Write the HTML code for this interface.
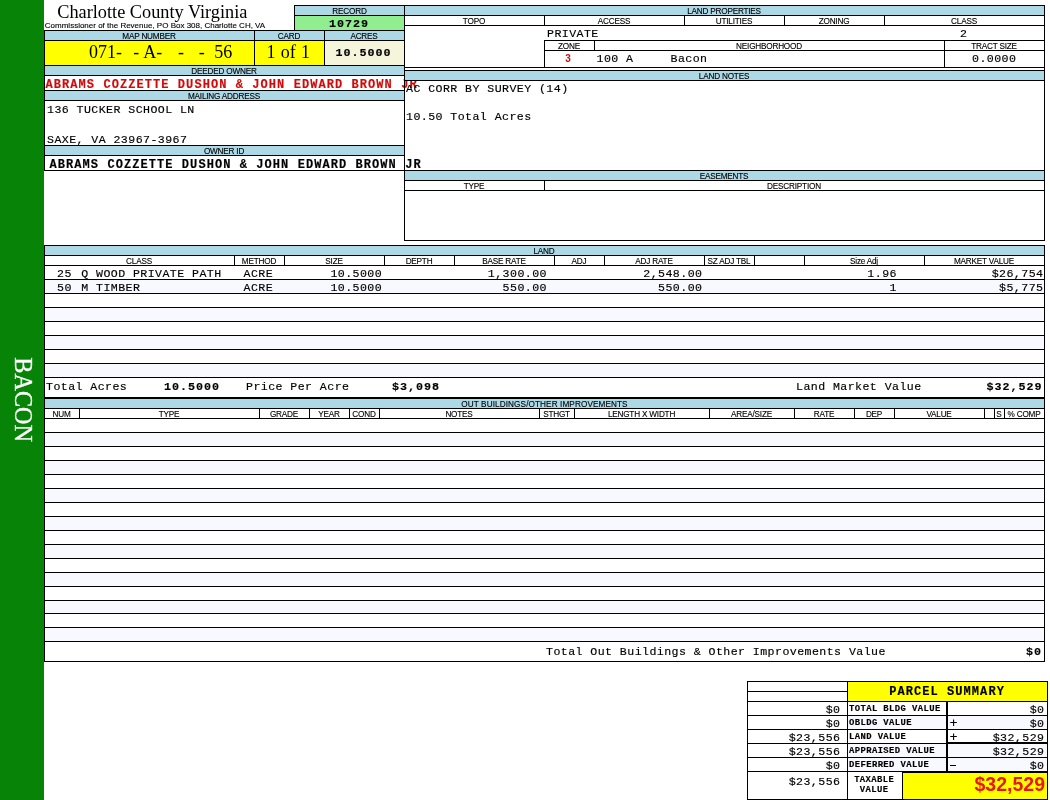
<!DOCTYPE html>
<html><head><meta charset="utf-8"><title>Charlotte County Virginia - Property Card</title>
<style>
html,body{margin:0;padding:0;background:#fff;}
body{width:1050px;height:800px;position:relative;overflow:hidden;will-change:transform;}
.r{position:absolute;}
.t{position:absolute;white-space:nowrap;line-height:20px;height:20px;color:#000;}
.m{font-family:"Liberation Mono",monospace;-webkit-text-stroke:0.15px currentColor;}
.s{font-family:"Liberation Sans",sans-serif;}
.f{font-family:"Liberation Serif",serif;}
</style></head><body>
<div class="r" style="left:0px;top:0px;width:44px;height:800px;background:#078307"></div>
<div class="r" style="left:44px;top:30px;width:1px;height:141px;background:#000"></div>
<div class="t f" style="left:0;top:0;font-size:24.2px;color:#fff;line-height:24px;transform-origin:0 0;transform:translate(35.3px,357.3px) rotate(90deg);-webkit-text-stroke:0.3px #fff;">BACON</div>
<div class="t f" style="top:-2px;font-size:18.3px;line-height:28px;height:28px;left:-147.7px;width:600px;text-align:center;">Charlotte County Virginia</div>
<div class="t s" style="top:17px;font-size:8px;line-height:17px;height:17px;left:-145px;width:600px;text-align:center;-webkit-text-stroke:0.12px #000;">Commissioner of the Revenue, PO Box 308, Charlotte CH, VA</div>
<div class="r" style="left:295px;top:6px;width:109px;height:9px;background:#ADD8E6"></div>
<div class="r" style="left:295px;top:16px;width:109px;height:14px;background:#90EE90"></div>
<div class="r" style="left:294px;top:5px;width:751px;height:1px;background:#000"></div>
<div class="r" style="left:294px;top:5px;width:1px;height:26px;background:#000"></div>
<div class="r" style="left:294px;top:15px;width:111px;height:1px;background:#000"></div>
<div class="t s" style="top:3px;font-size:8.2px;line-height:17px;height:17px;left:49.5px;width:600px;text-align:center;letter-spacing:-0.2px;-webkit-text-stroke:0.12px #000;">RECORD</div>
<div class="t m" style="top:13px;font-size:11.7px;line-height:22px;height:22px;left:48.99000000000001px;width:600px;text-align:center;font-weight:bold;letter-spacing:0.98px;">10729</div>
<div class="r" style="left:45px;top:31px;width:359px;height:9px;background:#ADD8E6"></div>
<div class="r" style="left:45px;top:41px;width:209px;height:24px;background:#FFFF00"></div>
<div class="r" style="left:255px;top:41px;width:69px;height:24px;background:#FFFF00"></div>
<div class="r" style="left:325px;top:41px;width:79px;height:24px;background:#F5F5DC"></div>
<div class="r" style="left:44px;top:30px;width:361px;height:1px;background:#000"></div>
<div class="r" style="left:44px;top:40px;width:361px;height:1px;background:#000"></div>
<div class="r" style="left:44px;top:65px;width:361px;height:1px;background:#000"></div>
<div class="r" style="left:254px;top:30px;width:1px;height:36px;background:#000"></div>
<div class="r" style="left:324px;top:30px;width:1px;height:36px;background:#000"></div>
<div class="t s" style="top:28px;font-size:8.2px;line-height:17px;height:17px;left:-151px;width:600px;text-align:center;letter-spacing:-0.2px;-webkit-text-stroke:0.12px #000;">MAP NUMBER</div>
<div class="t s" style="top:28px;font-size:8.2px;line-height:17px;height:17px;left:-11px;width:600px;text-align:center;letter-spacing:-0.2px;-webkit-text-stroke:0.12px #000;">CARD</div>
<div class="t s" style="top:28px;font-size:8.2px;line-height:17px;height:17px;left:64px;width:600px;text-align:center;letter-spacing:-0.2px;-webkit-text-stroke:0.12px #000;">ACRES</div>
<div class="t f" style="top:38px;font-size:18px;line-height:28px;height:28px;left:89px;">071-</div>
<div class="t f" style="top:38px;font-size:18px;line-height:28px;height:28px;left:133.3px;">-</div>
<div class="t f" style="top:38px;font-size:18px;line-height:28px;height:28px;left:143.3px;">A-</div>
<div class="t f" style="top:38px;font-size:18px;line-height:28px;height:28px;left:178px;">-</div>
<div class="t f" style="top:38px;font-size:18px;line-height:28px;height:28px;left:198.8px;">-</div>
<div class="t f" style="top:38px;font-size:18px;line-height:28px;height:28px;left:214.3px;">56</div>
<div class="t f" style="top:38px;font-size:18px;line-height:28px;height:28px;left:-11.699999999999989px;width:600px;text-align:center;word-spacing:0.8px;">1 of 1</div>
<div class="t m" style="top:42px;font-size:11.7px;line-height:22px;height:22px;left:63.49000000000001px;width:600px;text-align:center;font-weight:bold;letter-spacing:0.98px;">10.5000</div>
<div class="r" style="left:45px;top:66px;width:359px;height:9px;background:#ADD8E6"></div>
<div class="r" style="left:44px;top:75px;width:361px;height:1px;background:#000"></div>
<div class="t s" style="top:63px;font-size:8.2px;line-height:17px;height:17px;left:-76px;width:600px;text-align:center;letter-spacing:-0.2px;-webkit-text-stroke:0.12px #000;">DEEDED OWNER</div>
<div class="t m" style="top:74px;font-size:12.0px;line-height:22px;height:22px;left:45.5px;font-weight:bold;color:#D00A0A;letter-spacing:1.07px;">ABRAMS&nbsp;COZZETTE&nbsp;DUSHON&nbsp;&amp;&nbsp;JOHN&nbsp;EDWARD&nbsp;BROWN&nbsp;JR</div>
<div class="r" style="left:44px;top:90px;width:361px;height:1px;background:#000"></div>
<div class="r" style="left:45px;top:91px;width:359px;height:9px;background:#ADD8E6"></div>
<div class="r" style="left:44px;top:100px;width:361px;height:1px;background:#000"></div>
<div class="t s" style="top:88px;font-size:8.2px;line-height:17px;height:17px;left:-76px;width:600px;text-align:center;letter-spacing:-0.2px;-webkit-text-stroke:0.12px #000;">MAILING ADDRESS</div>
<div class="t m" style="top:99px;font-size:11.6px;line-height:21px;height:21px;left:47px;letter-spacing:0.43px;">136&nbsp;TUCKER&nbsp;SCHOOL&nbsp;LN</div>
<div class="t m" style="top:129px;font-size:11.6px;line-height:21px;height:21px;left:47px;letter-spacing:0.43px;">SAXE,&nbsp;VA&nbsp;23967-3967</div>
<div class="r" style="left:44px;top:145px;width:361px;height:1px;background:#000"></div>
<div class="r" style="left:45px;top:146px;width:359px;height:9px;background:#ADD8E6"></div>
<div class="r" style="left:44px;top:155px;width:361px;height:1px;background:#000"></div>
<div class="t s" style="top:143px;font-size:8.2px;line-height:17px;height:17px;left:-76px;width:600px;text-align:center;letter-spacing:-0.2px;-webkit-text-stroke:0.12px #000;">OWNER ID</div>
<div class="t m" style="top:154px;font-size:12.0px;line-height:22px;height:22px;left:49.5px;font-weight:bold;letter-spacing:1.07px;">ABRAMS&nbsp;COZZETTE&nbsp;DUSHON&nbsp;&amp;&nbsp;JOHN&nbsp;EDWARD&nbsp;BROWN&nbsp;JR</div>
<div class="r" style="left:44px;top:170px;width:361px;height:1px;background:#000"></div>
<div class="r" style="left:405px;top:6px;width:639px;height:9px;background:#ADD8E6"></div>
<div class="r" style="left:404px;top:5px;width:1px;height:236px;background:#000"></div>
<div class="r" style="left:1044px;top:5px;width:1px;height:236px;background:#000"></div>
<div class="r" style="left:404px;top:15px;width:641px;height:1px;background:#000"></div>
<div class="r" style="left:404px;top:25px;width:641px;height:1px;background:#000"></div>
<div class="r" style="left:544px;top:15px;width:1px;height:11px;background:#000"></div>
<div class="r" style="left:684px;top:15px;width:1px;height:11px;background:#000"></div>
<div class="r" style="left:784px;top:15px;width:1px;height:11px;background:#000"></div>
<div class="r" style="left:884px;top:15px;width:1px;height:11px;background:#000"></div>
<div class="t s" style="top:3px;font-size:8.2px;line-height:17px;height:17px;left:424px;width:600px;text-align:center;letter-spacing:-0.2px;-webkit-text-stroke:0.12px #000;">LAND PROPERTIES</div>
<div class="t s" style="top:13px;font-size:8.2px;line-height:17px;height:17px;left:174px;width:600px;text-align:center;letter-spacing:-0.2px;-webkit-text-stroke:0.12px #000;">TOPO</div>
<div class="t s" style="top:13px;font-size:8.2px;line-height:17px;height:17px;left:314px;width:600px;text-align:center;letter-spacing:-0.2px;-webkit-text-stroke:0.12px #000;">ACCESS</div>
<div class="t s" style="top:13px;font-size:8.2px;line-height:17px;height:17px;left:434px;width:600px;text-align:center;letter-spacing:-0.2px;-webkit-text-stroke:0.12px #000;">UTILITIES</div>
<div class="t s" style="top:13px;font-size:8.2px;line-height:17px;height:17px;left:534px;width:600px;text-align:center;letter-spacing:-0.2px;-webkit-text-stroke:0.12px #000;">ZONING</div>
<div class="t s" style="top:13px;font-size:8.2px;line-height:17px;height:17px;left:664px;width:600px;text-align:center;letter-spacing:-0.2px;-webkit-text-stroke:0.12px #000;">CLASS</div>
<div class="t m" style="top:23px;font-size:11.6px;line-height:21px;height:21px;left:547px;letter-spacing:0.43px;">PRIVATE</div>
<div class="t m" style="top:23px;font-size:11.6px;line-height:21px;height:21px;left:960px;letter-spacing:0.43px;">2</div>
<div class="r" style="left:544px;top:40px;width:501px;height:1px;background:#000"></div>
<div class="r" style="left:544px;top:50px;width:501px;height:1px;background:#000"></div>
<div class="r" style="left:544px;top:40px;width:1px;height:28px;background:#000"></div>
<div class="r" style="left:594px;top:40px;width:1px;height:11px;background:#000"></div>
<div class="r" style="left:944px;top:40px;width:1px;height:28px;background:#000"></div>
<div class="r" style="left:404px;top:67px;width:641px;height:1px;background:#000"></div>
<div class="t s" style="top:38px;font-size:8.2px;line-height:17px;height:17px;left:269px;width:600px;text-align:center;letter-spacing:-0.2px;-webkit-text-stroke:0.12px #000;">ZONE</div>
<div class="t s" style="top:38px;font-size:8.2px;line-height:17px;height:17px;left:469px;width:600px;text-align:center;letter-spacing:-0.2px;-webkit-text-stroke:0.12px #000;">NEIGHBORHOOD</div>
<div class="t s" style="top:38px;font-size:8.2px;line-height:17px;height:17px;left:694px;width:600px;text-align:center;letter-spacing:-0.2px;-webkit-text-stroke:0.12px #000;">TRACT SIZE</div>
<div class="t s" style="top:49px;font-size:10px;line-height:19px;height:19px;left:268px;width:600px;text-align:center;font-weight:bold;color:#D00A0A;">3</div>
<div class="t m" style="top:48px;font-size:11.6px;line-height:21px;height:21px;left:596.5px;letter-spacing:0.43px;">100&nbsp;A</div>
<div class="t m" style="top:48px;font-size:11.6px;line-height:21px;height:21px;left:670.5px;letter-spacing:0.43px;">Bacon</div>
<div class="t m" style="top:48px;font-size:11.6px;line-height:21px;height:21px;left:972px;letter-spacing:0.43px;">0.0000</div>
<div class="r" style="left:404px;top:70px;width:641px;height:1px;background:#000"></div>
<div class="r" style="left:405px;top:71px;width:639px;height:9px;background:#ADD8E6"></div>
<div class="r" style="left:404px;top:80px;width:641px;height:1px;background:#000"></div>
<div class="t s" style="top:68px;font-size:8.2px;line-height:17px;height:17px;left:424px;width:600px;text-align:center;letter-spacing:-0.2px;-webkit-text-stroke:0.12px #000;">LAND NOTES</div>
<div class="t m" style="top:78px;font-size:11.6px;line-height:21px;height:21px;left:406px;letter-spacing:0.43px;">AC&nbsp;CORR&nbsp;BY&nbsp;SURVEY&nbsp;(14)</div>
<div class="t m" style="top:106px;font-size:11.6px;line-height:21px;height:21px;left:406px;letter-spacing:0.43px;">10.50&nbsp;Total&nbsp;Acres</div>
<div class="r" style="left:404px;top:170px;width:641px;height:1px;background:#000"></div>
<div class="r" style="left:405px;top:171px;width:639px;height:9px;background:#ADD8E6"></div>
<div class="r" style="left:404px;top:180px;width:641px;height:1px;background:#000"></div>
<div class="r" style="left:404px;top:190px;width:641px;height:1px;background:#000"></div>
<div class="r" style="left:544px;top:180px;width:1px;height:11px;background:#000"></div>
<div class="r" style="left:404px;top:240px;width:641px;height:1px;background:#000"></div>
<div class="t s" style="top:168px;font-size:8.2px;line-height:17px;height:17px;left:424px;width:600px;text-align:center;letter-spacing:-0.2px;-webkit-text-stroke:0.12px #000;">EASEMENTS</div>
<div class="t s" style="top:178px;font-size:8.2px;line-height:17px;height:17px;left:174px;width:600px;text-align:center;letter-spacing:-0.2px;-webkit-text-stroke:0.12px #000;">TYPE</div>
<div class="t s" style="top:178px;font-size:8.2px;line-height:17px;height:17px;left:494px;width:600px;text-align:center;letter-spacing:-0.2px;-webkit-text-stroke:0.12px #000;">DESCRIPTION</div>
<div class="r" style="left:44px;top:245px;width:1px;height:417px;background:#000"></div>
<div class="r" style="left:1044px;top:245px;width:1px;height:417px;background:#000"></div>
<div class="r" style="left:44px;top:245px;width:1001px;height:1px;background:#000"></div>
<div class="r" style="left:45px;top:246px;width:999px;height:9px;background:#ADD8E6"></div>
<div class="r" style="left:44px;top:255px;width:1001px;height:1px;background:#000"></div>
<div class="r" style="left:44px;top:265px;width:1001px;height:1px;background:#000"></div>
<div class="t s" style="top:243px;font-size:8.2px;line-height:17px;height:17px;left:244px;width:600px;text-align:center;letter-spacing:-0.2px;-webkit-text-stroke:0.12px #000;">LAND</div>
<div class="t s" style="top:253px;font-size:8.2px;line-height:17px;height:17px;left:-161.0px;width:600px;text-align:center;letter-spacing:-0.2px;-webkit-text-stroke:0.12px #000;">CLASS</div>
<div class="r" style="left:234px;top:255px;width:1px;height:11px;background:#000"></div>
<div class="t s" style="top:253px;font-size:8.2px;line-height:17px;height:17px;left:-41.0px;width:600px;text-align:center;letter-spacing:-0.2px;-webkit-text-stroke:0.12px #000;">METHOD</div>
<div class="r" style="left:284px;top:255px;width:1px;height:11px;background:#000"></div>
<div class="t s" style="top:253px;font-size:8.2px;line-height:17px;height:17px;left:34.0px;width:600px;text-align:center;letter-spacing:-0.2px;-webkit-text-stroke:0.12px #000;">SIZE</div>
<div class="r" style="left:384px;top:255px;width:1px;height:11px;background:#000"></div>
<div class="t s" style="top:253px;font-size:8.2px;line-height:17px;height:17px;left:119.0px;width:600px;text-align:center;letter-spacing:-0.2px;-webkit-text-stroke:0.12px #000;">DEPTH</div>
<div class="r" style="left:454px;top:255px;width:1px;height:11px;background:#000"></div>
<div class="t s" style="top:253px;font-size:8.2px;line-height:17px;height:17px;left:204.0px;width:600px;text-align:center;letter-spacing:-0.2px;-webkit-text-stroke:0.12px #000;">BASE RATE</div>
<div class="r" style="left:554px;top:255px;width:1px;height:11px;background:#000"></div>
<div class="t s" style="top:253px;font-size:8.2px;line-height:17px;height:17px;left:279.0px;width:600px;text-align:center;letter-spacing:-0.2px;-webkit-text-stroke:0.12px #000;">ADJ</div>
<div class="r" style="left:604px;top:255px;width:1px;height:11px;background:#000"></div>
<div class="t s" style="top:253px;font-size:8.2px;line-height:17px;height:17px;left:354.0px;width:600px;text-align:center;letter-spacing:-0.2px;-webkit-text-stroke:0.12px #000;">ADJ RATE</div>
<div class="r" style="left:704px;top:255px;width:1px;height:11px;background:#000"></div>
<div class="t s" style="top:253px;font-size:8.2px;line-height:17px;height:17px;left:429.0px;width:600px;text-align:center;letter-spacing:-0.2px;-webkit-text-stroke:0.12px #000;">SZ ADJ TBL</div>
<div class="r" style="left:754px;top:255px;width:1px;height:11px;background:#000"></div>
<div class="r" style="left:804px;top:255px;width:1px;height:11px;background:#000"></div>
<div class="t s" style="top:253px;font-size:8.2px;line-height:17px;height:17px;left:564.0px;width:600px;text-align:center;letter-spacing:-0.2px;-webkit-text-stroke:0.12px #000;">Size Adj</div>
<div class="r" style="left:924px;top:255px;width:1px;height:11px;background:#000"></div>
<div class="t s" style="top:253px;font-size:8.2px;line-height:17px;height:17px;left:684.0px;width:600px;text-align:center;letter-spacing:-0.2px;-webkit-text-stroke:0.12px #000;">MARKET VALUE</div>
<div class="r" style="left:44px;top:279px;width:1001px;height:1px;background:#000"></div>
<div class="r" style="left:45px;top:280px;width:999px;height:13px;background:#F8F8FF"></div>
<div class="r" style="left:44px;top:293px;width:1001px;height:1px;background:#000"></div>
<div class="r" style="left:44px;top:307px;width:1001px;height:1px;background:#000"></div>
<div class="r" style="left:45px;top:308px;width:999px;height:13px;background:#F8F8FF"></div>
<div class="r" style="left:44px;top:321px;width:1001px;height:1px;background:#000"></div>
<div class="r" style="left:44px;top:335px;width:1001px;height:1px;background:#000"></div>
<div class="r" style="left:45px;top:336px;width:999px;height:13px;background:#F8F8FF"></div>
<div class="r" style="left:44px;top:349px;width:1001px;height:1px;background:#000"></div>
<div class="r" style="left:44px;top:363px;width:1001px;height:1px;background:#000"></div>
<div class="r" style="left:45px;top:364px;width:999px;height:13px;background:#F8F8FF"></div>
<div class="r" style="left:44px;top:377px;width:1001px;height:1px;background:#000"></div>
<div class="r" style="left:44px;top:397px;width:1001px;height:2px;background:#000"></div>
<div class="t m" style="top:263px;font-size:11.6px;line-height:21px;height:21px;left:57px;letter-spacing:0.43px;">25</div>
<div class="t m" style="top:277px;font-size:11.6px;line-height:21px;height:21px;left:57px;letter-spacing:0.43px;">50</div>
<div class="t m" style="top:263px;font-size:11.6px;line-height:21px;height:21px;left:81.3px;letter-spacing:0.43px;">Q</div>
<div class="t m" style="top:277px;font-size:11.6px;line-height:21px;height:21px;left:81.3px;letter-spacing:0.43px;">M</div>
<div class="t m" style="top:263px;font-size:11.6px;line-height:21px;height:21px;left:96px;letter-spacing:0.43px;">WOOD&nbsp;PRIVATE&nbsp;PATH</div>
<div class="t m" style="top:277px;font-size:11.6px;line-height:21px;height:21px;left:96px;letter-spacing:0.43px;">TIMBER</div>
<div class="t m" style="top:263px;font-size:11.6px;line-height:21px;height:21px;left:243.5px;letter-spacing:0.43px;">ACRE</div>
<div class="t m" style="top:277px;font-size:11.6px;line-height:21px;height:21px;left:243.5px;letter-spacing:0.43px;">ACRE</div>
<div class="t m" style="top:263px;font-size:11.6px;line-height:21px;height:21px;left:-217.87px;width:600px;text-align:right;letter-spacing:0.43px;">10.5000</div>
<div class="t m" style="top:277px;font-size:11.6px;line-height:21px;height:21px;left:-217.87px;width:600px;text-align:right;letter-spacing:0.43px;">10.5000</div>
<div class="t m" style="top:263px;font-size:11.6px;line-height:21px;height:21px;left:-53.07000000000005px;width:600px;text-align:right;letter-spacing:0.43px;">1,300.00</div>
<div class="t m" style="top:277px;font-size:11.6px;line-height:21px;height:21px;left:-53.07000000000005px;width:600px;text-align:right;letter-spacing:0.43px;">550.00</div>
<div class="t m" style="top:263px;font-size:11.6px;line-height:21px;height:21px;left:102.42999999999995px;width:600px;text-align:right;letter-spacing:0.43px;">2,548.00</div>
<div class="t m" style="top:277px;font-size:11.6px;line-height:21px;height:21px;left:102.42999999999995px;width:600px;text-align:right;letter-spacing:0.43px;">550.00</div>
<div class="t m" style="top:263px;font-size:11.6px;line-height:21px;height:21px;left:296.92999999999995px;width:600px;text-align:right;letter-spacing:0.43px;">1.96</div>
<div class="t m" style="top:277px;font-size:11.6px;line-height:21px;height:21px;left:296.92999999999995px;width:600px;text-align:right;letter-spacing:0.43px;">1</div>
<div class="t m" style="top:263px;font-size:11.6px;line-height:21px;height:21px;left:443.43000000000006px;width:600px;text-align:right;letter-spacing:0.43px;">$26,754</div>
<div class="t m" style="top:277px;font-size:11.6px;line-height:21px;height:21px;left:443.43000000000006px;width:600px;text-align:right;letter-spacing:0.43px;">$5,775</div>
<div class="t m" style="top:376px;font-size:11.6px;line-height:21px;height:21px;left:46px;letter-spacing:0.43px;">Total&nbsp;Acres</div>
<div class="t m" style="top:376px;font-size:11.7px;line-height:22px;height:22px;left:164px;font-weight:bold;letter-spacing:0.98px;">10.5000</div>
<div class="t m" style="top:376px;font-size:11.6px;line-height:21px;height:21px;left:246px;letter-spacing:0.43px;">Price&nbsp;Per&nbsp;Acre</div>
<div class="t m" style="top:376px;font-size:11.7px;line-height:22px;height:22px;left:392px;font-weight:bold;letter-spacing:0.98px;">$3,098</div>
<div class="t m" style="top:376px;font-size:11.6px;line-height:21px;height:21px;left:796px;letter-spacing:0.43px;">Land&nbsp;Market&nbsp;Value</div>
<div class="t m" style="top:376px;font-size:11.7px;line-height:22px;height:22px;left:442.48px;width:600px;text-align:right;font-weight:bold;letter-spacing:0.98px;">$32,529</div>
<div class="r" style="left:45px;top:399px;width:999px;height:9px;background:#ADD8E6"></div>
<div class="r" style="left:44px;top:408px;width:1001px;height:1px;background:#000"></div>
<div class="r" style="left:44px;top:418px;width:1001px;height:1px;background:#000"></div>
<div class="t s" style="top:396px;font-size:8.2px;line-height:17px;height:17px;left:244.5px;width:600px;text-align:center;letter-spacing:0.1px;-webkit-text-stroke:0.12px #000;">OUT BUILDINGS/OTHER IMPROVEMENTS</div>
<div class="t s" style="top:406px;font-size:8.2px;line-height:17px;height:17px;left:-238.5px;width:600px;text-align:center;letter-spacing:-0.2px;-webkit-text-stroke:0.12px #000;">NUM</div>
<div class="r" style="left:79px;top:408px;width:1px;height:11px;background:#000"></div>
<div class="t s" style="top:406px;font-size:8.2px;line-height:17px;height:17px;left:-131.0px;width:600px;text-align:center;letter-spacing:-0.2px;-webkit-text-stroke:0.12px #000;">TYPE</div>
<div class="r" style="left:259px;top:408px;width:1px;height:11px;background:#000"></div>
<div class="t s" style="top:406px;font-size:8.2px;line-height:17px;height:17px;left:-16.0px;width:600px;text-align:center;letter-spacing:-0.2px;-webkit-text-stroke:0.12px #000;">GRADE</div>
<div class="r" style="left:309px;top:408px;width:1px;height:11px;background:#000"></div>
<div class="t s" style="top:406px;font-size:8.2px;line-height:17px;height:17px;left:29.0px;width:600px;text-align:center;letter-spacing:-0.2px;-webkit-text-stroke:0.12px #000;">YEAR</div>
<div class="r" style="left:349px;top:408px;width:1px;height:11px;background:#000"></div>
<div class="t s" style="top:406px;font-size:8.2px;line-height:17px;height:17px;left:64.0px;width:600px;text-align:center;letter-spacing:-0.2px;-webkit-text-stroke:0.12px #000;">COND</div>
<div class="r" style="left:379px;top:408px;width:1px;height:11px;background:#000"></div>
<div class="t s" style="top:406px;font-size:8.2px;line-height:17px;height:17px;left:159.0px;width:600px;text-align:center;letter-spacing:-0.2px;-webkit-text-stroke:0.12px #000;">NOTES</div>
<div class="r" style="left:539px;top:408px;width:1px;height:11px;background:#000"></div>
<div class="t s" style="top:406px;font-size:8.2px;line-height:17px;height:17px;left:256.5px;width:600px;text-align:center;letter-spacing:-0.2px;-webkit-text-stroke:0.12px #000;">STHGT</div>
<div class="r" style="left:574px;top:408px;width:1px;height:11px;background:#000"></div>
<div class="t s" style="top:406px;font-size:8.2px;line-height:17px;height:17px;left:341.5px;width:600px;text-align:center;letter-spacing:-0.2px;-webkit-text-stroke:0.12px #000;">LENGTH X WIDTH</div>
<div class="r" style="left:709px;top:408px;width:1px;height:11px;background:#000"></div>
<div class="t s" style="top:406px;font-size:8.2px;line-height:17px;height:17px;left:451.5px;width:600px;text-align:center;letter-spacing:-0.2px;-webkit-text-stroke:0.12px #000;">AREA/SIZE</div>
<div class="r" style="left:794px;top:408px;width:1px;height:11px;background:#000"></div>
<div class="t s" style="top:406px;font-size:8.2px;line-height:17px;height:17px;left:524.0px;width:600px;text-align:center;letter-spacing:-0.2px;-webkit-text-stroke:0.12px #000;">RATE</div>
<div class="r" style="left:854px;top:408px;width:1px;height:11px;background:#000"></div>
<div class="t s" style="top:406px;font-size:8.2px;line-height:17px;height:17px;left:574.0px;width:600px;text-align:center;letter-spacing:-0.2px;-webkit-text-stroke:0.12px #000;">DEP</div>
<div class="r" style="left:894px;top:408px;width:1px;height:11px;background:#000"></div>
<div class="t s" style="top:406px;font-size:8.2px;line-height:17px;height:17px;left:639.0px;width:600px;text-align:center;letter-spacing:-0.2px;-webkit-text-stroke:0.12px #000;">VALUE</div>
<div class="r" style="left:984px;top:408px;width:1px;height:11px;background:#000"></div>
<div class="r" style="left:994px;top:408px;width:1px;height:11px;background:#000"></div>
<div class="t s" style="top:406px;font-size:8.2px;line-height:17px;height:17px;left:699.0px;width:600px;text-align:center;letter-spacing:-0.2px;-webkit-text-stroke:0.12px #000;">S</div>
<div class="r" style="left:1004px;top:408px;width:1px;height:11px;background:#000"></div>
<div class="t s" style="top:406px;font-size:8.2px;line-height:17px;height:17px;left:724.0px;width:600px;text-align:center;letter-spacing:-0.2px;-webkit-text-stroke:0.12px #000;">% COMP</div>
<div class="r" style="left:44px;top:432px;width:1001px;height:1px;background:#000"></div>
<div class="r" style="left:45px;top:433px;width:999px;height:13px;background:#F8F8FF"></div>
<div class="r" style="left:44px;top:446px;width:1001px;height:1px;background:#000"></div>
<div class="r" style="left:44px;top:460px;width:1001px;height:1px;background:#000"></div>
<div class="r" style="left:45px;top:461px;width:999px;height:13px;background:#F8F8FF"></div>
<div class="r" style="left:44px;top:474px;width:1001px;height:1px;background:#000"></div>
<div class="r" style="left:44px;top:488px;width:1001px;height:1px;background:#000"></div>
<div class="r" style="left:45px;top:489px;width:999px;height:13px;background:#F8F8FF"></div>
<div class="r" style="left:44px;top:502px;width:1001px;height:1px;background:#000"></div>
<div class="r" style="left:44px;top:516px;width:1001px;height:1px;background:#000"></div>
<div class="r" style="left:45px;top:517px;width:999px;height:13px;background:#F8F8FF"></div>
<div class="r" style="left:44px;top:530px;width:1001px;height:1px;background:#000"></div>
<div class="r" style="left:44px;top:544px;width:1001px;height:1px;background:#000"></div>
<div class="r" style="left:45px;top:545px;width:999px;height:13px;background:#F8F8FF"></div>
<div class="r" style="left:44px;top:558px;width:1001px;height:1px;background:#000"></div>
<div class="r" style="left:44px;top:572px;width:1001px;height:1px;background:#000"></div>
<div class="r" style="left:45px;top:573px;width:999px;height:13px;background:#F8F8FF"></div>
<div class="r" style="left:44px;top:586px;width:1001px;height:1px;background:#000"></div>
<div class="r" style="left:44px;top:600px;width:1001px;height:1px;background:#000"></div>
<div class="r" style="left:45px;top:601px;width:999px;height:12px;background:#F8F8FF"></div>
<div class="r" style="left:44px;top:613px;width:1001px;height:1px;background:#000"></div>
<div class="r" style="left:44px;top:627px;width:1001px;height:1px;background:#000"></div>
<div class="r" style="left:45px;top:628px;width:999px;height:13px;background:#F8F8FF"></div>
<div class="r" style="left:44px;top:641px;width:1001px;height:1px;background:#000"></div>
<div class="r" style="left:44px;top:661px;width:1001px;height:1px;background:#000"></div>
<div class="t m" style="top:641px;font-size:11.6px;line-height:21px;height:21px;left:546px;letter-spacing:0.43px;">Total&nbsp;Out&nbsp;Buildings&nbsp;&amp;&nbsp;Other&nbsp;Improvements&nbsp;Value</div>
<div class="t m" style="top:641px;font-size:11.7px;line-height:22px;height:22px;left:441.98px;width:600px;text-align:right;font-weight:bold;letter-spacing:0.98px;">$0</div>
<div class="r" style="left:848px;top:682px;width:199px;height:19px;background:#FFFF00"></div>
<div class="r" style="left:747px;top:681px;width:301px;height:1px;background:#000"></div>
<div class="r" style="left:747px;top:681px;width:1px;height:119px;background:#000"></div>
<div class="r" style="left:1047px;top:681px;width:1px;height:119px;background:#000"></div>
<div class="r" style="left:847px;top:681px;width:1px;height:119px;background:#000"></div>
<div class="r" style="left:747px;top:691px;width:101px;height:1px;background:#000"></div>
<div class="r" style="left:747px;top:701px;width:301px;height:1px;background:#000"></div>
<div class="r" style="left:848px;top:716px;width:199px;height:13px;background:#F8F8FF"></div>
<div class="r" style="left:848px;top:744px;width:199px;height:13px;background:#F8F8FF"></div>
<div class="r" style="left:848px;top:758px;width:199px;height:13px;background:#F8F8FF"></div>
<div class="r" style="left:747px;top:715px;width:301px;height:1px;background:#000"></div>
<div class="r" style="left:747px;top:729px;width:301px;height:1px;background:#000"></div>
<div class="r" style="left:747px;top:757px;width:301px;height:1px;background:#000"></div>
<div class="r" style="left:747px;top:743px;width:201px;height:1px;background:#000"></div>
<div class="r" style="left:947px;top:742px;width:101px;height:2px;background:#000"></div>
<div class="r" style="left:747px;top:771px;width:156px;height:1px;background:#000"></div>
<div class="r" style="left:902px;top:771px;width:146px;height:2px;background:#000"></div>
<div class="r" style="left:946px;top:701px;width:2px;height:71px;background:#000"></div>
<div class="r" style="left:903px;top:773px;width:144px;height:26px;background:#FFFF00"></div>
<div class="r" style="left:902px;top:771px;width:1px;height:29px;background:#000"></div>
<div class="r" style="left:747px;top:799px;width:301px;height:1px;background:#000"></div>
<div class="t m" style="top:681px;font-size:12.0px;line-height:22px;height:22px;left:647.035px;width:600px;text-align:center;font-weight:bold;letter-spacing:1.07px;">PARCEL&nbsp;SUMMARY</div>
<div class="r" style="left:950px;top:765px;width:6px;height:1px;background:#000"></div>
<div class="t m" style="top:700px;font-size:8.9px;line-height:18px;height:18px;left:849px;font-weight:bold;letter-spacing:0.4px;">TOTAL&nbsp;BLDG&nbsp;VALUE</div>
<div class="t m" style="top:699px;font-size:11.6px;line-height:21px;height:21px;left:240.42999999999995px;width:600px;text-align:right;letter-spacing:0.43px;">$0</div>
<div class="t m" style="top:699px;font-size:11.6px;line-height:21px;height:21px;left:444.43000000000006px;width:600px;text-align:right;letter-spacing:0.43px;">$0</div>
<div class="t m" style="top:714px;font-size:8.9px;line-height:18px;height:18px;left:849px;font-weight:bold;letter-spacing:0.4px;">OBLDG&nbsp;VALUE</div>
<div class="t m" style="top:713px;font-size:11.6px;line-height:21px;height:21px;left:240.42999999999995px;width:600px;text-align:right;letter-spacing:0.43px;">$0</div>
<div class="t m" style="top:713px;font-size:11.6px;line-height:21px;height:21px;left:444.43000000000006px;width:600px;text-align:right;letter-spacing:0.43px;">$0</div>
<div class="t m" style="top:712px;font-size:13.5px;line-height:23px;height:23px;left:949.5px;letter-spacing:0px;">+</div>
<div class="t m" style="top:728px;font-size:8.9px;line-height:18px;height:18px;left:849px;font-weight:bold;letter-spacing:0.4px;">LAND&nbsp;VALUE</div>
<div class="t m" style="top:727px;font-size:11.6px;line-height:21px;height:21px;left:240.42999999999995px;width:600px;text-align:right;letter-spacing:0.43px;">$23,556</div>
<div class="t m" style="top:727px;font-size:11.6px;line-height:21px;height:21px;left:444.43000000000006px;width:600px;text-align:right;letter-spacing:0.43px;">$32,529</div>
<div class="t m" style="top:726px;font-size:13.5px;line-height:23px;height:23px;left:949.5px;letter-spacing:0px;">+</div>
<div class="t m" style="top:742px;font-size:8.9px;line-height:18px;height:18px;left:849px;font-weight:bold;letter-spacing:0.4px;">APPRAISED&nbsp;VALUE</div>
<div class="t m" style="top:741px;font-size:11.6px;line-height:21px;height:21px;left:240.42999999999995px;width:600px;text-align:right;letter-spacing:0.43px;">$23,556</div>
<div class="t m" style="top:741px;font-size:11.6px;line-height:21px;height:21px;left:444.43000000000006px;width:600px;text-align:right;letter-spacing:0.43px;">$32,529</div>
<div class="t m" style="top:756px;font-size:8.9px;line-height:18px;height:18px;left:849px;font-weight:bold;letter-spacing:0.4px;">DEFERRED&nbsp;VALUE</div>
<div class="t m" style="top:755px;font-size:11.6px;line-height:21px;height:21px;left:240.42999999999995px;width:600px;text-align:right;letter-spacing:0.43px;">$0</div>
<div class="t m" style="top:755px;font-size:11.6px;line-height:21px;height:21px;left:444.43000000000006px;width:600px;text-align:right;letter-spacing:0.43px;">$0</div>
<div class="t m" style="top:771px;font-size:11.6px;line-height:21px;height:21px;left:240.42999999999995px;width:600px;text-align:right;letter-spacing:0.43px;">$23,556</div>
<div class="t m" style="top:771px;font-size:8.9px;line-height:18px;height:18px;left:574.2px;width:600px;text-align:center;font-weight:bold;letter-spacing:0.4px;">TAXABLE</div>
<div class="t m" style="top:781px;font-size:8.9px;line-height:18px;height:18px;left:574.2px;width:600px;text-align:center;font-weight:bold;letter-spacing:0.4px;">VALUE</div>
<div class="t s" style="top:769px;font-size:19.5px;line-height:30px;height:30px;left:445px;width:600px;text-align:right;font-weight:bold;color:#E81810;">$32,529</div>
</body></html>
